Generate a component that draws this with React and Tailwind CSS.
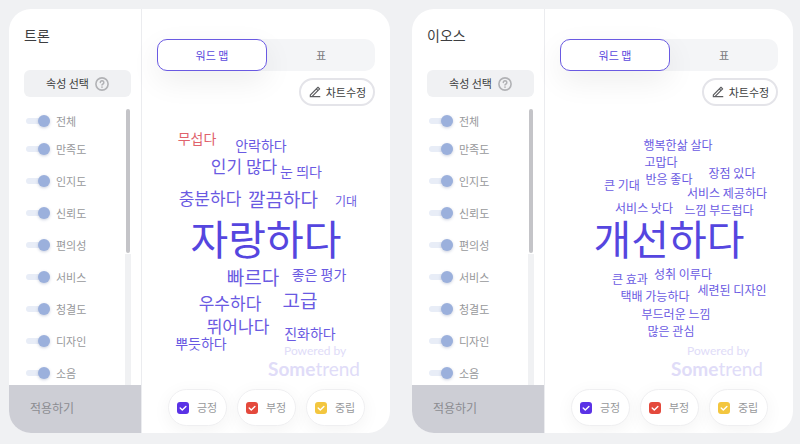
import clsx from "clsx";
import { RiEdit2Line } from "react-icons/ri";

const ATTRIBUTES = ["전체", "만족도", "인지도", "신뢰도", "편의성", "서비스", "청결도", "디자인", "소음"];

const SENTIMENTS = [
    { label: "긍정", box: "bg-[#5a32e6]" },
    { label: "부정", box: "bg-[#e4493c]" },
    { label: "중립", box: "bg-[#f3c63f]" },
];

// x / y are the centre of each word on the cloud canvas
const TRON_WORDS = [
    { text: "무섭다", x: 55, y: 32, size: 14, color: "text-[#e0626c]" },
    { text: "안락하다", x: 119, y: 39, size: 14 },
    { text: "인기 많다", x: 102, y: 59, size: 17 },
    { text: "눈 띄다", x: 159, y: 65, size: 14 },
    { text: "충분하다", x: 68, y: 91, size: 17 },
    { text: "깔끔하다", x: 141, y: 92, size: 19 },
    { text: "기대", x: 204, y: 95, size: 12 },
    { text: "자랑하다", x: 124, y: 131, size: 41, color: "text-[#5546df]" },
    { text: "빠르다", x: 111, y: 170, size: 19 },
    { text: "좋은 평가", x: 177, y: 168, size: 14 },
    { text: "우수하다", x: 88, y: 196, size: 17 },
    { text: "고급", x: 158, y: 193, size: 19 },
    { text: "뛰어나다", x: 96, y: 219, size: 17 },
    { text: "진화하다", x: 168, y: 227, size: 14 },
    { text: "뿌듯하다", x: 59, y: 237, size: 14 },
];

const EOS_WORDS = [
    { text: "행복한삶 살다", x: 133, y: 39, size: 12 },
    { text: "고맙다", x: 116, y: 56, size: 12 },
    { text: "장점 있다", x: 187, y: 67, size: 12 },
    { text: "반응 좋다", x: 124, y: 73, size: 12 },
    { text: "큰 기대", x: 77, y: 79, size: 12 },
    { text: "서비스 제공하다", x: 182, y: 87, size: 12 },
    { text: "서비스 낫다", x: 99, y: 102, size: 12 },
    { text: "느낌 부드럽다", x: 174, y: 104, size: 12 },
    { text: "개선하다", x: 124, y: 131, size: 41, color: "text-[#5546df]" },
    { text: "성취 이루다", x: 138, y: 168, size: 12 },
    { text: "큰 효과", x: 85, y: 173, size: 12 },
    { text: "세련된 디자인", x: 187, y: 184, size: 12 },
    { text: "택배 가능하다", x: 110, y: 190, size: 12 },
    { text: "부드러운 느낌", x: 131, y: 208, size: 12 },
    { text: "많은 관심", x: 126, y: 225, size: 12 },
];

const HelpIcon = () => (
    <svg viewBox="0 0 14 14" className="w-3.5 h-3.5 text-[#b1b2b5]" fill="none" stroke="currentColor" strokeLinecap="round" strokeLinejoin="round">
        <circle cx="7" cy="7" r="6.1" strokeWidth="1.6" />
        <path d="M5.3 5.5a1.75 1.75 0 1 1 2.7 1.5c-.6.4-1 .6-1 1.1" strokeWidth="1.5" />
        <path d="M7 10.1v.1" strokeWidth="1.6" />
    </svg>
);

const AttributeSwitch = ({ label }) => (
    <label className="h-8 first:h-6 last:-mb-1 shrink-0 flex items-center gap-1.5 text-[11px] text-[#97989b]">
        <input
            type="checkbox"
            role="switch"
            defaultChecked
            className="appearance-none flex items-center w-6 h-1.5 rounded-full bg-[#e8edf7] after:content-[''] after:shrink-0 after:ml-auto after:w-3 after:h-3 after:rounded-full after:bg-[#9bb0dc] after:shadow-[0_1px_3px_rgba(80,100,150,0.3)]"
        />
        {label}
    </label>
);

const Sidebar = ({ title }) => (
    <aside className="w-[133px] shrink-0 border-r border-[#ebecef] flex flex-col">
        <h2 className="mt-4 ml-[15px] h-5 text-[14px] leading-5 text-[#3d3e40]">{title}</h2>
        <button type="button" className="mt-[25px] ml-[15px] mr-[10px] h-[27px] rounded-md bg-[#f0f1f3] flex items-center justify-center gap-1.5 text-[11px] text-[#3d3e40]">
            속성 선택
            <HelpIcon />
        </button>
        <div className="mt-3 flex-1 flex overflow-hidden">
            <div className="flex-1 pl-[17px] flex flex-col">
                {ATTRIBUTES.map((name) => (
                    <AttributeSwitch key={name} label={name} />
                ))}
            </div>
            <div className="w-1.5 mr-[10px] bg-[#f0f1f3] flex flex-col">
                <div className="h-[145px] bg-white flex justify-center pb-px">
                    <div className="w-1 rounded-full bg-[#c4c4c8]" />
                </div>
            </div>
        </div>
        <button type="button" className="h-12 bg-[#cdced5] pl-[21px] pb-0.5 text-left text-[12px] text-[#8b8c91]">
            적용하기
        </button>
    </aside>
);

const WordCloud = ({ words }) => (
    <div className="relative w-[248px] h-[283px] mx-auto">
        {words.map(({ text, x, y, size, color }) => (
            <span
                key={text}
                className={clsx("absolute -translate-x-1/2 -translate-y-1/2 whitespace-nowrap leading-none", color || "text-[#6a5ae2]")}
                style={{ left: x, top: y, fontSize: size }}
            >
                {text}
            </span>
        ))}
        <div className="absolute right-[30px] top-[237px] flex flex-col text-[#e0dcf8] font-['Lato','Liberation_Sans',sans-serif]">
            <span className="pl-4 text-[12px] leading-4">Powered by</span>
            <span className="text-[19px] leading-5">
                <b className="font-bold">Some</b>trend
            </span>
        </div>
    </div>
);

const SentimentFilter = ({ label, box }) => (
    <label className="h-[37px] w-[59px] rounded-full bg-white border border-[#efeff1] shadow-[0_4px_18px_rgba(0,0,0,0.05)] flex items-center justify-center gap-2 text-[11px] text-[#97989b]">
        <span className="grid">
            <input type="checkbox" defaultChecked className={clsx("col-start-1 row-start-1 appearance-none w-3 h-3 rounded-[3px]", box)} />
            <svg viewBox="0 0 12 12" className="col-start-1 row-start-1 w-3 h-3 pointer-events-none" fill="none" stroke="white" strokeWidth="1.4" strokeLinecap="round" strokeLinejoin="round">
                <path d="M3.2 6.1l2.1 2 3.6-3.7" />
            </svg>
        </span>
        {label}
    </label>
);

const KeywordCard = ({ title, words }) => (
    <section className="flex-1 flex bg-white rounded-[22px] overflow-hidden">
        <Sidebar title={title} />
        <div className="flex-1 min-w-0 pt-[30px] pb-[7px] flex flex-col">
            <div role="tablist" className="mx-[15px] h-8 rounded-[10px] bg-[#f4f5f7] flex text-[11px]">
                <button type="button" role="tab" aria-selected="true" className="flex-1 rounded-[10px] bg-white border border-[#6a5ae2] text-[#5a49dd] shadow-[0_10px_30px_rgba(0,0,0,0.07)]">
                    워드 맵
                </button>
                <button type="button" role="tab" aria-selected="false" className="flex-1 text-[#7a7b7e]">
                    표
                </button>
            </div>
            <button type="button" className="mt-[7px] mr-[15px] self-end h-7 w-[76px] rounded-full bg-white border-2 border-[#e4e4e9] flex items-center justify-center gap-1 text-[11px] text-[#3d3e40] relative">
                <RiEdit2Line className="w-3.5 h-3.5 shrink-0 text-[#5c5d60]" />
                차트수정
            </button>
            <WordCloud words={words} />
            <div className="flex justify-center gap-[10px]">
                {SENTIMENTS.map((item) => (
                    <SentimentFilter key={item.label} {...item} />
                ))}
            </div>
        </div>
    </section>
);

export default function App() {
    return (
        <main className="min-h-screen bg-[#f0f1f3] pt-[9px] pb-[10px] pl-[9px] pr-[7px] flex items-start gap-[22px] font-['Noto_Sans_CJK_KR',sans-serif]">
            <KeywordCard title="트론" words={TRON_WORDS} />
            <KeywordCard title="이오스" words={EOS_WORDS} />
        </main>
    );
}
